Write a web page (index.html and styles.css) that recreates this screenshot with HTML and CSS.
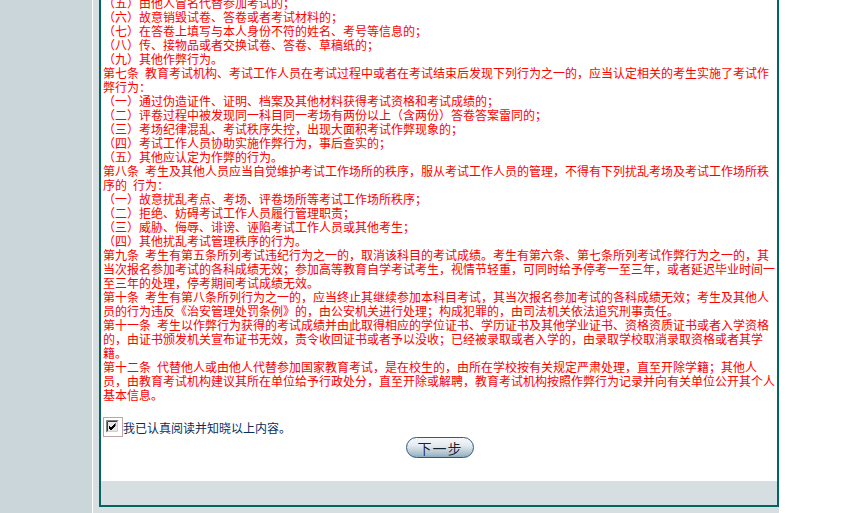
FILE: index.html
```html
<!DOCTYPE html>
<html lang="zh-CN">
<head>
<meta charset="utf-8">
<title>考试规则</title>
<link rel="stylesheet" href="styles.css">
</head>
<body>
<div class="page">
  <div class="sidebar"></div>
  <div class="main">
    <div class="box">
      <div class="content">
        <div class="rules">
          <div>（五）由他人冒名代替参加考试的；</div>
          <div>（六）故意销毁试卷、答卷或者考试材料的；</div>
          <div>（七）在答卷上填写与本人身份不符的姓名、考号等信息的；</div>
          <div>（八）传、接物品或者交换试卷、答卷、草稿纸的；</div>
          <div>（九）其他作弊行为。</div>
          <div>第七条&ensp;教育考试机构、考试工作人员在考试过程中或者在考试结束后发现下列行为之一的，应当认定相关的考生实施了考试作弊行为：</div>
          <div>（一）通过伪造证件、证明、档案及其他材料获得考试资格和考试成绩的；</div>
          <div>（二）评卷过程中被发现同一科目同一考场有两份以上（含两份）答卷答案雷同的；</div>
          <div>（三）考场纪律混乱、考试秩序失控，出现大面积考试作弊现象的；</div>
          <div>（四）考试工作人员协助实施作弊行为，事后查实的；</div>
          <div>（五）其他应认定为作弊的行为。</div>
          <div>第八条&ensp;考生及其他人员应当自觉维护考试工作场所的秩序，服从考试工作人员的管理，不得有下列扰乱考场及考试工作场所秩序的&ensp;行为：</div>
          <div>（一）故意扰乱考点、考场、评卷场所等考试工作场所秩序；</div>
          <div>（二）拒绝、妨碍考试工作人员履行管理职责；</div>
          <div>（三）威胁、侮辱、诽谤、诬陷考试工作人员或其他考生；</div>
          <div>（四）其他扰乱考试管理秩序的行为。</div>
          <div>第九条&ensp;考生有第五条所列考试违纪行为之一的，取消该科目的考试成绩。考生有第六条、第七条所列考试作弊行为之一的，其当次报名参加考试的各科成绩无效；参加高等教育自学考试考生，视情节轻重，可同时给予停考一至三年，或者延迟毕业时间一至三年的处理，停考期间考试成绩无效。</div>
          <div>第十条&ensp;考生有第八条所列行为之一的，应当终止其继续参加本科目考试，其当次报名参加考试的各科成绩无效；考生及其他人员的行为违反《治安管理处罚条例》的，由公安机关进行处理；构成犯罪的，由司法机关依法追究刑事责任。</div>
          <div>第十一条&ensp;考生以作弊行为获得的考试成绩并由此取得相应的学位证书、学历证书及其他学业证书、资格资质证书或者入学资格的，由证书颁发机关宣布证书无效，责令收回证书或者予以没收；已经被录取或者入学的，由录取学校取消录取资格或者其学籍。</div>
          <div>第十二条&ensp;代替他人或由他人代替参加国家教育考试，是在校生的，由所在学校按有关规定严肃处理，直至开除学籍；其他人员，由教育考试机构建议其所在单位给予行政处分，直至开除或解聘，教育考试机构按照作弊行为记录并向有关单位公开其个人基本信息。</div>
        </div>
        <label class="agree">
          <span class="check">
            <svg width="20" height="20" viewBox="0 0 20 20">
              <rect x="0.5" y="0.5" width="19" height="19" fill="none" stroke="#7a4a4a" stroke-width="1" stroke-dasharray="1 1"/>
              <rect x="3" y="3" width="13" height="13" fill="#ffffff"/>
              <path d="M3.5 15.5 V3.5 H15.5" fill="none" stroke="#808080"/>
              <path d="M4.5 14.5 V4.5 H14.5" fill="none" stroke="#404040"/>
              <path d="M3.5 15.5 H15.5 V3.5" fill="none" stroke="#ffffff"/>
              <path d="M4.5 14.5 H14.5 V4.5" fill="none" stroke="#d4d0c8"/>
              <rect x="5" y="5" width="9" height="9" fill="#e6e6e6"/>
              <path d="M6 9 L8 11 L12.5 6.5 M6 10 L8 12 L12.5 7.5 M6 11 L8 13 L12.5 8.5" fill="none" stroke="#000" stroke-width="1"/>
            </svg>
          </span>
          <span class="agree-text">我已认真阅读并知晓以上内容。</span>
        </label>
        <div class="actions">
          <button class="next" type="button">下一步</button>
        </div>
      </div>
      <div class="band"></div>
    </div>
  </div>
</div>
</body>
</html>
```

FILE: styles.css
```css
* {
  box-sizing: border-box;
}

html,
body {
  margin: 0;
  padding: 0;
  height: 100%;
}

body {
  background: #ffffff;
  font-family: "Noto Sans CJK SC", "Liberation Sans", sans-serif;
  font-size: 12px;
  text-spacing-trim: space-all;
}

.page {
  display: flex;
  height: 513px;
  overflow: hidden;
}

.sidebar {
  flex: none;
  width: 93px;
  background: #cbd6db;
  border-right: 1px solid #ffffff;
}

.main {
  flex: none;
  width: 686px;
  background: #d6dee1;
  padding-left: 6px;
  display: flex;
  flex-direction: column;
}

.box {
  flex: none;
  height: 507px;
  border: 2px solid #00665f;
  border-top: 0;
  background: #ffffff;
  display: flex;
  flex-direction: column;
}

.content {
  flex: 1;
  padding-left: 2px;
  overflow: hidden;
}

.rules {
  margin-top: -4px;
  width: 674px;
  color: #ff0000;
  line-height: 14px;
}

.agree {
  display: flex;
  align-items: center;
  height: 20px;
  margin-top: 15px;
  color: #0d2c5a;
  line-height: 14px;
}

.check {
  display: block;
  width: 20px;
  height: 20px;
}

.check svg {
  display: block;
}

.agree-text {
  padding-top: 1px;
}

.actions {
  display: flex;
  justify-content: center;
}

.next {
  width: 68px;
  height: 21px;
  padding: 0;
  border: 1px solid #34597a;
  border-radius: 11px;
  background: linear-gradient(#f6f8f9 0%, #e4eaee 40%, #a9bfcd 85%, #8eaabd 100%);
  font-family: "Noto Sans CJK SC", sans-serif;
  font-size: 14px;
  line-height: 18px;
  letter-spacing: 1px;
  color: #16222e;
  text-shadow: 0 0 1px #ffffff;
}

.band {
  flex: none;
  height: 24px;
  background: #d6dee1;
}
```
